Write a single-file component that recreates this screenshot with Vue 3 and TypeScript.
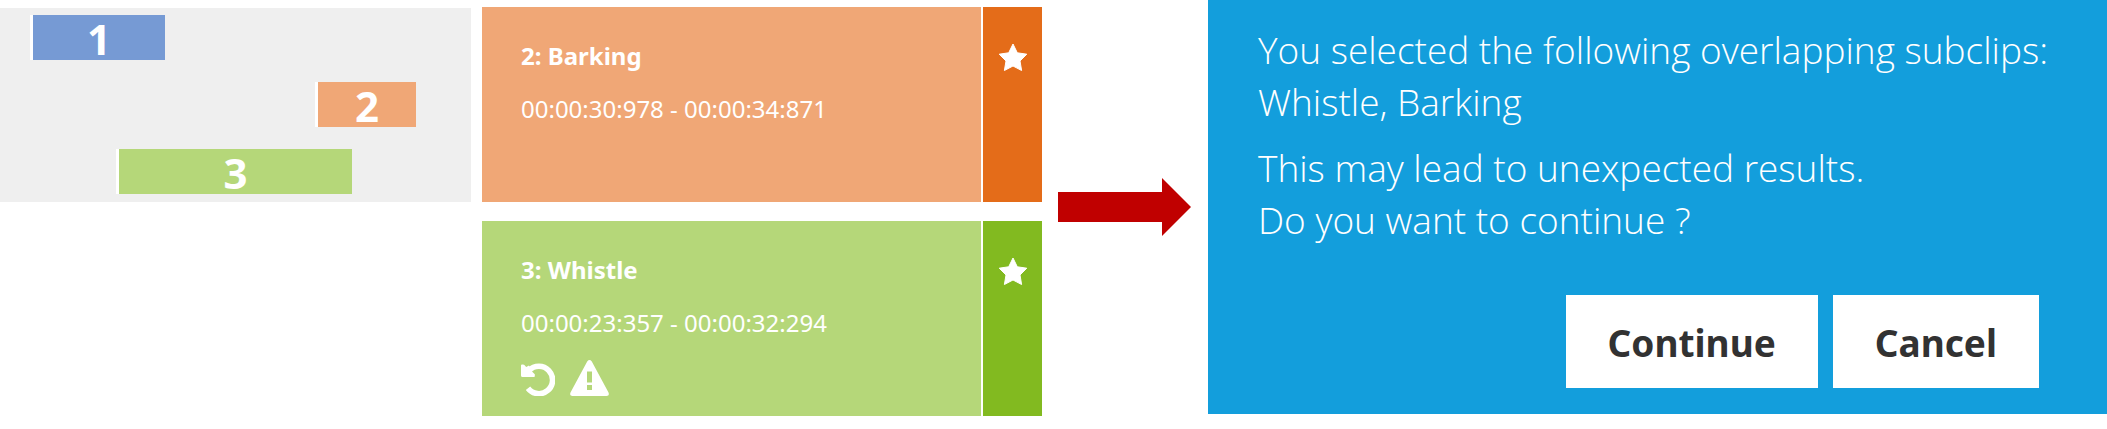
<script setup lang="ts">
interface Clip {
  id: number
  start: number
  length: number
  tone: string
}

interface Subclip {
  id: number
  name: string
  range: string
  tone: string
  flagged: boolean
}

const timelineLength = 471

const clips: Clip[] = [
  { id: 1, start: 30, length: 135, tone: 'blue' },
  { id: 2, start: 315, length: 101, tone: 'orange' },
  { id: 3, start: 116, length: 236, tone: 'green' },
]

const subclips: Subclip[] = [
  { id: 2, name: 'Barking', range: '00:00:30:978 - 00:00:34:871', tone: 'orange', flagged: false },
  { id: 3, name: 'Whistle', range: '00:00:23:357 - 00:00:32:294', tone: 'green', flagged: true },
]

const percent = (value: number): string => `${(value / timelineLength) * 100}%`
</script>

<template>
  <main class="page">
    <section class="timeline" aria-label="Timeline">
      <div v-for="clip in clips" :key="clip.id" class="track">
        <div
          class="clip"
          :class="clip.tone"
          :style="{ marginLeft: percent(clip.start), width: percent(clip.length) }"
        >
          {{ clip.id }}
        </div>
      </div>
    </section>

    <section class="subclips" aria-label="Subclips">
      <article v-for="item in subclips" :key="item.id" class="card" :class="item.tone">
        <div class="details">
          <h2 class="title">{{ item.id }}: {{ item.name }}</h2>
          <p class="range">{{ item.range }}</p>
          <div v-if="item.flagged" class="actions">
            <button type="button" class="icon-button" aria-label="Revert">
              <svg width="34" height="36" viewBox="0 0 34 36">
                <path
                  d="M8 10.5A13.7 13.7 0 1 1 7 28.3"
                  fill="none"
                  stroke="currentColor"
                  stroke-width="5.6"
                />
                <path
                  d="M0 5.5Q0 4.400 1 4.400H2Q3 4.400 3.400 5L5.200 7L8 5.500L11 11.500L13.800 14.300V16.300Q13.800 17 13 17H1.500Q0 17 0 15.500Z"
                  fill="currentColor"
                />
              </svg>
            </button>
            <svg class="warning" width="39" height="36" viewBox="0 0 39 36" role="img" aria-label="Overlap">
              <path
                d="M17.200 1.500Q19.500 -1.300 21.800 1.500L38.500 32.500Q39.800 36 36.500 36H2.500Q-0.800 36 0.500 32.500ZM17 11.500V22.500H22V11.500ZM17 25V30H22V25Z"
                fill="currentColor"
                fill-rule="evenodd"
              />
            </svg>
          </div>
        </div>
        <button type="button" class="favourite" aria-label="Favourite">
          <svg width="30" height="29" viewBox="0 0 30 29">
            <path
              d="M15 1L19.300 9.800L28.800 11.200L22 18L23.600 27.500L15 23L6.400 27.500L8 18L1.200 11.200L10.700 9.800Z"
              fill="currentColor"
              stroke="currentColor"
              stroke-width="1"
              stroke-linejoin="round"
            />
          </svg>
        </button>
      </article>
    </section>

    <svg class="arrow" viewBox="0 0 133 58" aria-hidden="true">
      <path d="M0 14H104V0L133 29L104 58V44H0Z" fill="#c00000" />
    </svg>

    <section class="dialog" role="alertdialog" aria-label="Overlapping subclips">
      <p>You selected the following overlapping subclips:<br />Whistle, Barking</p>
      <p>This may lead to unexpected results.<br />Do you want to continue ?</p>
      <div class="buttons">
        <button type="button">Continue</button>
        <button type="button">Cancel</button>
      </div>
    </section>
  </main>
</template>

<style>
body {
  margin: 0;
  background: #fff;
}
</style>

<style scoped>
.page {
  display: grid;
  grid-template-columns: 471fr 571fr 166fr 899fr;
  align-items: start;
  font-family: "Noto Sans", "Open Sans", sans-serif;
  color: #fff;
}

.timeline {
  display: flex;
  flex-direction: column;
  gap: 22px;
  margin-top: 8px;
  padding: 7px 0 8px;
  background: #efefef;
}

.clip {
  box-sizing: border-box;
  height: 45px;
  border-left: 3px solid #fff;
  font-size: 42px;
  font-weight: 700;
  line-height: 48px;
  text-align: center;
}

.clip.blue {
  background: #769ad4;
}

.orange {
  --body: #f0a776;
  --side: #e46c19;
}

.green {
  --body: #b5d779;
  --side: #82ba20;
}

.clip.orange,
.clip.green {
  background: var(--body);
}

.subclips {
  display: grid;
  gap: 19px;
  margin: 7px 0 0 11px;
}

.card {
  display: grid;
  grid-template-columns: 1fr 59px;
  gap: 2px;
  min-height: 195px;
}

.details {
  padding: 31px 39px 0;
  background: var(--body);
}

.title,
.range {
  margin: 0;
  font-size: 24px;
  line-height: 36px;
}

.range {
  margin-top: 17px;
}

.actions {
  display: flex;
  gap: 15px;
  margin-top: 19px;
}

.icon-button,
.favourite {
  padding: 0;
  border: 0;
  background: none;
  color: inherit;
}

.icon-button svg,
.warning,
.favourite svg {
  display: block;
}

.favourite {
  display: flex;
  justify-content: center;
  align-items: flex-start;
  padding-top: 36px;
  background: var(--side);
}

.arrow {
  display: block;
  margin: 178px 17px 0 16px;
}

.dialog {
  padding: 24px 0 26px 50px;
  background: #139edc;
}

.dialog p {
  margin: 0 0 14px;
  font-family: "Open Sans", "Noto Sans", sans-serif;
  font-size: 37px;
  font-weight: 300;
  line-height: 52px;
}

.buttons {
  display: flex;
  justify-content: flex-end;
  gap: 15px;
  margin: 49px 68px 0 0;
}

.buttons button {
  padding: 22px 42px 19px;
  border: 0;
  background: #fff;
  color: #323232;
  font-family: "Noto Sans", "Open Sans", sans-serif;
  font-size: 37px;
  font-weight: 700;
  line-height: 52px;
}
</style>
